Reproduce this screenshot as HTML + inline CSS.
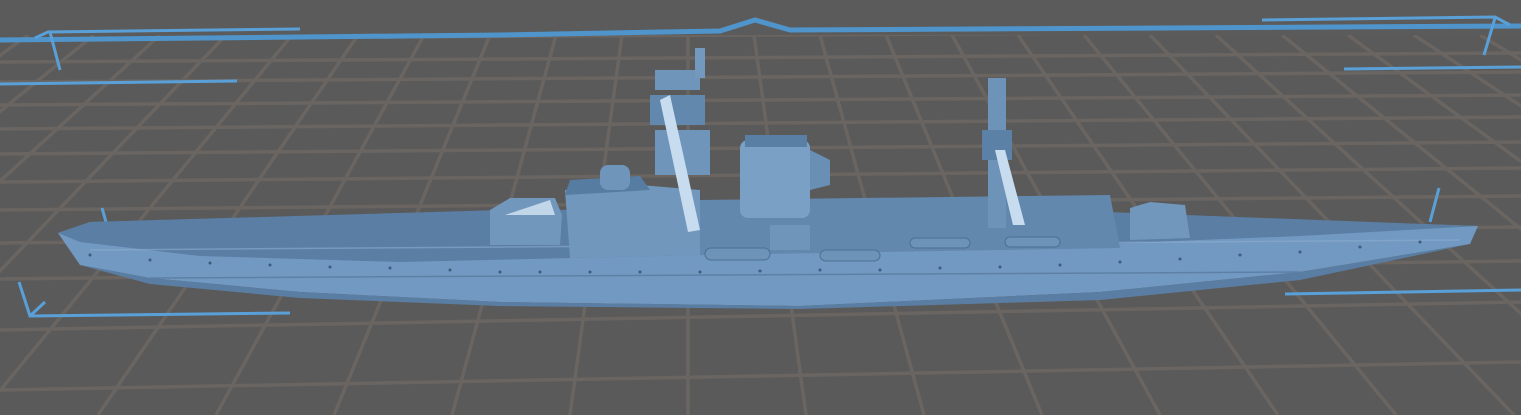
<!DOCTYPE html>
<html><head><style>html,body{margin:0;padding:0;background:#5b5b5b;overflow:hidden}svg{display:block}</style></head>
<body>
<svg width="1521" height="415" viewBox="0 0 1521 415" xmlns="http://www.w3.org/2000/svg">
<rect width="1521" height="415" fill="#5a5a5a"/>
<g stroke="#6a6561" stroke-width="3.5" fill="none">
<line x1="0" y1="39" x2="1521" y2="31"/>
<line x1="0" y1="62" x2="1521" y2="53"/>
<line x1="0" y1="82" x2="1521" y2="72"/>
<line x1="0" y1="105" x2="1521" y2="95"/>
<line x1="0" y1="129" x2="1521" y2="117"/>
<line x1="0" y1="154" x2="1521" y2="142"/>
<line x1="0" y1="182" x2="1521" y2="168"/>
<line x1="0" y1="210" x2="1521" y2="196"/>
<line x1="0" y1="243" x2="1521" y2="227"/>
<line x1="0" y1="279" x2="1521" y2="261"/>
<line x1="0" y1="330" x2="1521" y2="302"/>
<line x1="0" y1="390" x2="1521" y2="362"/>
</g>
<g stroke="#6a6561" stroke-width="3.5" fill="none">
<line x1="-610" y1="415" x2="-38" y2="35"/>
<line x1="-492" y1="415" x2="28" y2="35"/>
<line x1="-374" y1="415" x2="94" y2="35"/>
<line x1="-256" y1="415" x2="160" y2="35"/>
<line x1="-138" y1="415" x2="226" y2="35"/>
<line x1="-20" y1="415" x2="292" y2="35"/>
<line x1="98" y1="415" x2="358" y2="35"/>
<line x1="216" y1="415" x2="424" y2="35"/>
<line x1="334" y1="415" x2="490" y2="35"/>
<line x1="452" y1="415" x2="556" y2="35"/>
<line x1="570" y1="415" x2="622" y2="35"/>
<line x1="688" y1="415" x2="688" y2="35"/>
<line x1="806" y1="415" x2="754" y2="35"/>
<line x1="924" y1="415" x2="820" y2="35"/>
<line x1="1042" y1="415" x2="886" y2="35"/>
<line x1="1160" y1="415" x2="952" y2="35"/>
<line x1="1278" y1="415" x2="1018" y2="35"/>
<line x1="1396" y1="415" x2="1084" y2="35"/>
<line x1="1514" y1="415" x2="1150" y2="35"/>
<line x1="1632" y1="415" x2="1216" y2="35"/>
<line x1="1750" y1="415" x2="1282" y2="35"/>
<line x1="1868" y1="415" x2="1348" y2="35"/>
<line x1="1986" y1="415" x2="1414" y2="35"/>
<line x1="2104" y1="415" x2="1480" y2="35"/>
<line x1="2222" y1="415" x2="1546" y2="35"/>
</g>
<rect x="0" y="0" width="1521" height="35" fill="#5b5b5b"/>
<g stroke="#5aa0d8" fill="none" stroke-width="3">
<path d="M0 40 L500 35 L720 31 L755 20 L790 30 L1521 26" stroke-width="5" stroke="#4f95cc"/>
<path d="M35 38 L48 32 L300 29"/>
<path d="M50 32 L60 70"/>
<path d="M0 84 L237 81"/>
<path d="M1262 20 L1495 17 L1510 25"/>
<path d="M1495 18 L1484 55"/>
<path d="M1344 69 L1521 67"/>
<path d="M19 282 L30 316 L290 313"/>
<path d="M30 316 L45 302"/>
<path d="M1285 294 L1521 290"/>
<path d="M1439 188 L1430 222"/>
<path d="M102 208 L106 222"/>
</g>
<g>
<path d="M58 233 L90 222 L500 212 L1000 210 L1478 226 L1470 244 L1300 272 L1100 292 L800 306 L500 302 L300 292 L150 278 L80 265 Z" fill="#7299c1"/>
<path d="M58 233 L90 222 L500 210 L1000 208 L1478 226 L1300 236 L1000 248 L700 255 L400 262 L200 256 L80 242 Z" fill="#5a7ea4"/>
<path d="M80 265 L150 278 L300 292 L500 302 L800 306 L1100 292 L1300 272 L1470 244 L1300 280 L1100 300 L800 309 L500 306 L300 298 L150 284 Z" fill="#5a7ea3"/>
<line x1="90" y1="250" x2="1460" y2="240" stroke="#8badd0" stroke-width="1.5" opacity="0.6"/>
<line x1="150" y1="278" x2="1300" y2="272" stroke="#5d81a6" stroke-width="1.5"/>
<path d="M565 190 L640 185 L700 190 L700 255 L570 258 Z" fill="#7197bd"/>
<path d="M570 180 L640 176 L650 190 L565 195 Z" fill="#577ca2"/>
<path d="M700 200 L1110 195 L1120 248 L700 255 Z" fill="#6388ae"/>
<rect x="740" y="140" width="70" height="78" rx="8" fill="#7ba0c6"/>
<rect x="745" y="135" width="62" height="12" fill="#5a7fa5"/>
<path d="M810 150 L830 160 L830 185 L810 190 Z" fill="#6a8fb4"/>
<rect x="655" y="70" width="45" height="20" fill="#6f95ba"/>
<rect x="695" y="48" width="10" height="30" fill="#7399be"/>
<rect x="650" y="95" width="55" height="30" fill="#6388ae"/>
<rect x="655" y="130" width="55" height="45" fill="#6f95ba"/>
<path d="M660 100 L670 95 L700 230 L688 232 Z" fill="#c8dcf0"/>
<rect x="988" y="78" width="18" height="150" fill="#6d93b8"/>
<rect x="982" y="130" width="30" height="30" fill="#5c81a7"/>
<path d="M995 150 L1005 150 L1025 225 L1013 225 Z" fill="#c8dcf0"/>
<path d="M490 210 L510 198 L555 198 L562 215 L560 245 L490 245 Z" fill="#7197bc"/>
<path d="M505 215 L550 200 L555 215 Z" fill="#c2d6ea"/>
<rect x="600" y="165" width="30" height="25" rx="8" fill="#6f95ba"/>
<path d="M1130 208 L1150 202 L1185 205 L1190 238 L1130 240 Z" fill="#7197bc"/>
<rect x="770" y="225" width="40" height="25" fill="#6f95ba"/>
<g fill="#6d93b8" stroke="#4d6f92" stroke-width="1">
<rect x="705" y="248" width="65" height="12" rx="6"/>
<rect x="820" y="250" width="60" height="11" rx="6"/>
<rect x="910" y="238" width="60" height="10" rx="5"/>
<rect x="1005" y="237" width="55" height="10" rx="5"/>
</g>
<g fill="#3e5c7c">
<circle cx="90" cy="255" r="1.5"/><circle cx="150" cy="260" r="1.5"/><circle cx="210" cy="263" r="1.5"/><circle cx="270" cy="265" r="1.5"/><circle cx="330" cy="267" r="1.5"/><circle cx="390" cy="268" r="1.5"/><circle cx="450" cy="270" r="1.5"/><circle cx="500" cy="272" r="1.5"/><circle cx="540" cy="272" r="1.5"/><circle cx="590" cy="272" r="1.5"/><circle cx="640" cy="272" r="1.5"/><circle cx="700" cy="272" r="1.5"/><circle cx="760" cy="271" r="1.5"/><circle cx="820" cy="270" r="1.5"/><circle cx="880" cy="270" r="1.5"/><circle cx="940" cy="268" r="1.5"/><circle cx="1000" cy="267" r="1.5"/><circle cx="1060" cy="265" r="1.5"/><circle cx="1120" cy="262" r="1.5"/><circle cx="1180" cy="259" r="1.5"/><circle cx="1240" cy="255" r="1.5"/><circle cx="1300" cy="252" r="1.5"/><circle cx="1360" cy="247" r="1.5"/><circle cx="1420" cy="242" r="1.5"/>
</g>
</g>
</svg>
</body></html>
